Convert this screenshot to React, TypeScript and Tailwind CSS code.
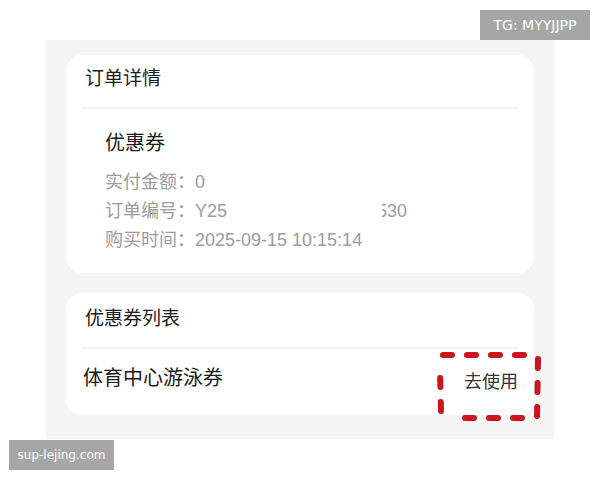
const font = '"Liberation Sans", "Noto Sans CJK SC", sans-serif';

const orderRows = [
  { label: '实付金额：', value: '0' },
  { label: '订单编号：', value: 'order' },
  { label: '购买时间：', value: '2025-09-15 10:15:14' },
];

function OrderNo() {
  return (
    <span>
      Y25
      <span className="inline-block w-[150px]" />
      <span className="relative">
        530
        <span className="absolute left-0 top-0 w-[5px] h-full bg-white" />
      </span>
    </span>
  );
}

export default function App() {
  return (
    <div className="relative w-[600px] h-[480px] bg-white overflow-hidden" style={{ fontFamily: font }}>
      <div className="pt-[40px] pl-[46px]">
        <div className="w-[508px] bg-[#f5f5f5] px-5 pt-[15px] pb-6 flex flex-col gap-5">
          {/* Order details */}
          <div className="bg-white rounded-2xl pb-[18px]">
            <div className="pt-3 pb-4 pl-[19px] text-[19px] leading-6 text-[#1c1c1c]">订单详情</div>
            <div className="mx-[17px] h-[2px] bg-[#f2f2f2]" />
            <div className="pl-[39px]">
              <div className="mt-5 text-[20px] leading-7 text-[#1a1a1a]">优惠券</div>
              <div className="mt-[11px]">
                {orderRows.map((row) => (
                  <div key={row.label} className="flex text-[18px] leading-[29px] text-[#9c9c9c]">
                    <span>{row.label}</span>
                    <span>{row.value === 'order' ? <OrderNo /> : row.value}</span>
                  </div>
                ))}
              </div>
            </div>
          </div>

          {/* Coupon list */}
          <div className="bg-white rounded-2xl">
            <div className="pt-[14px] pb-4 pl-[19px] text-[19px] leading-6 text-[#1c1c1c]">优惠券列表</div>
            <div className="mx-[17px] h-[2px] bg-[#f2f2f2]" />
            <div className="h-[66px] flex items-center justify-between pl-[17px] pr-4">
              <span className="mb-2 text-[20px] text-[#1a1a1a]">体育中心游泳券</span>
              <span className="text-[18px] text-[#333333]">去使用</span>
            </div>
          </div>
        </div>
      </div>

      {/* red dashed annotation */}
      <svg className="absolute left-0 top-0" width="600" height="480" viewBox="0 0 600 480">
        <g stroke="#c8161e" strokeWidth="6" strokeLinecap="round" fill="none" strokeDasharray="9 15">
          <path d="M443 355 L530 355" />
          <path d="M538 359 L537 417" />
          <path d="M522 418 L455 418" />
          <path d="M441 411 L440 372" />
        </g>
      </svg>

      {/* watermarks */}
      <div
        className="absolute left-[480px] top-[10px] w-[110px] h-[30px] bg-[#a6a6a6] text-white text-[14px] flex items-center justify-center"
        style={{ fontFamily: '"DejaVu Sans", sans-serif' }}
      >
        TG: MYYJJPP
      </div>
      <div
        className="absolute left-[9px] top-[440px] w-[105px] h-[30px] bg-[#a6a6a6] text-white text-[12px] flex items-center justify-center"
        style={{ fontFamily: '"DejaVu Sans", sans-serif' }}
      >
        sup-lejing.com
      </div>
    </div>
  );
}
